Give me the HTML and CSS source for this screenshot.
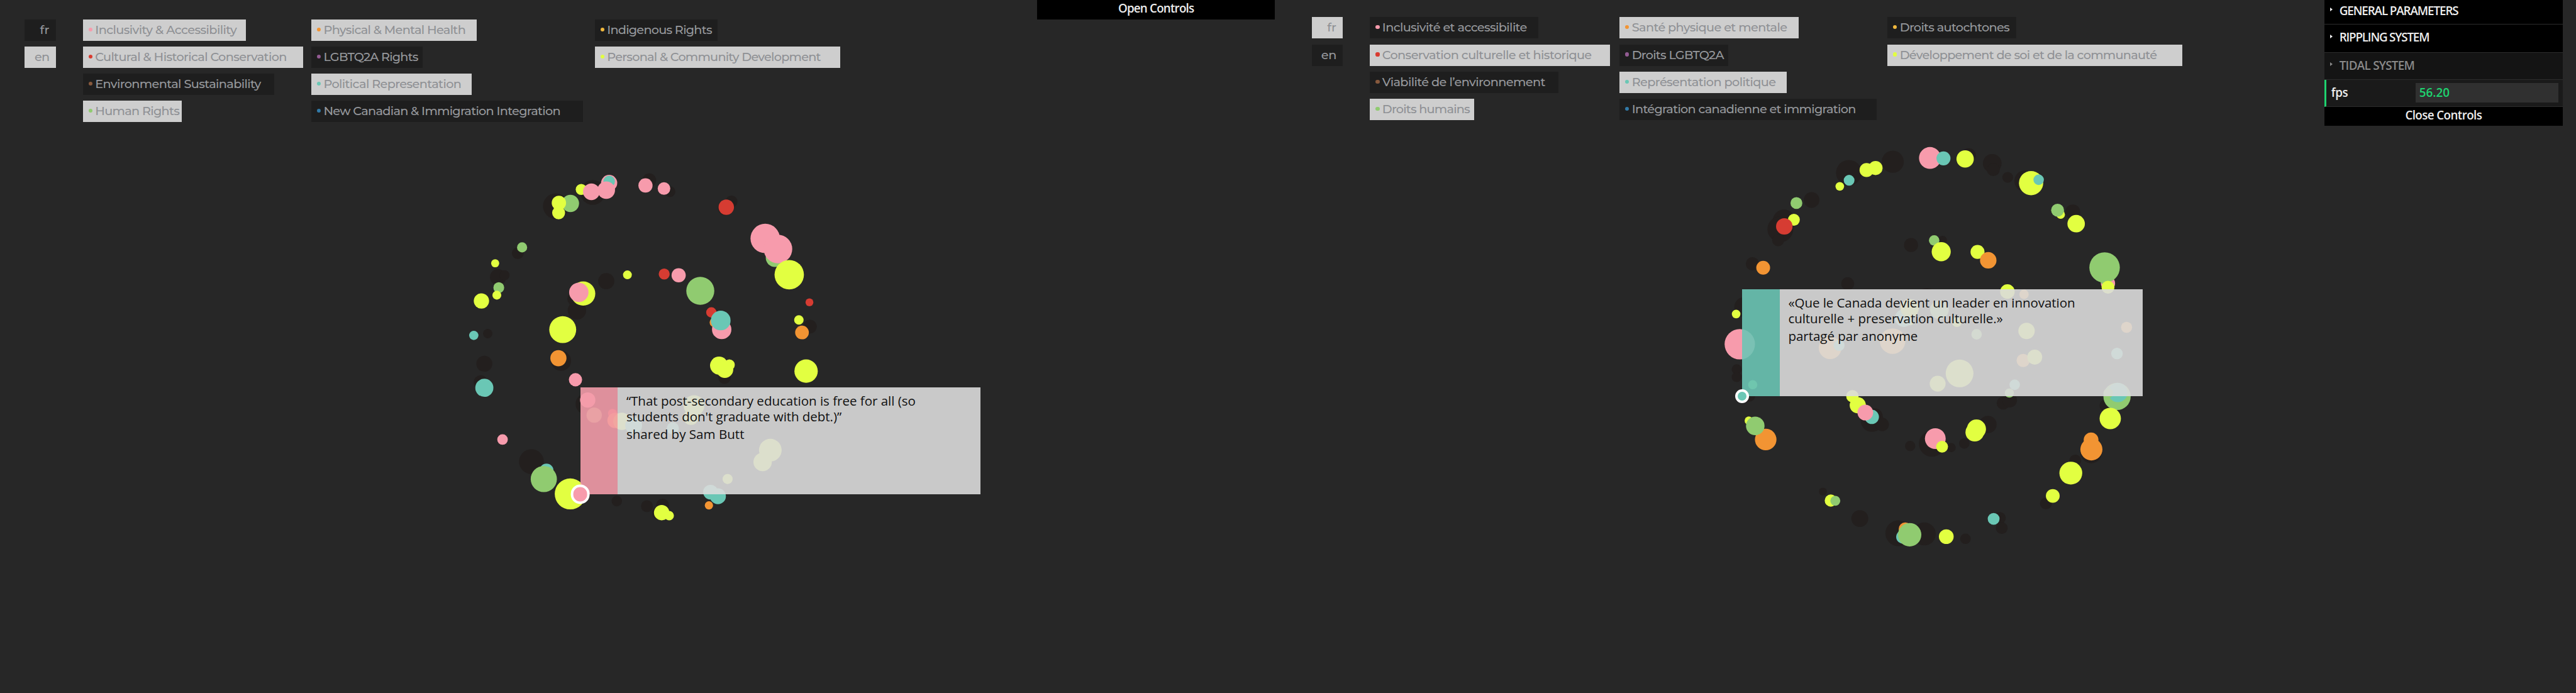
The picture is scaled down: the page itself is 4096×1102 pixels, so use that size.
FILE: index.html
```
<!DOCTYPE html>
<html lang="en">
<head>
<meta charset="utf-8">
<title>Visions for Canada</title>
<link rel="stylesheet" href="styles.css">
</head>
<body>
<main class="stage">
  <svg class="field" id="field" viewBox="0 0 4782 1286"></svg>

  <section class="panel panel-en">
    <nav class="langs">
      <a class="tag lang"><span data-text="15">fr</span></a>
      <a class="tag lang on"><span data-text="25">en</span></a>
    </nav>
    <div class="column">
      <a class="tag on pink" data-box="303"><span data-text="260">Inclusivity &amp; Accessibility</span></a>
      <a class="tag on red" data-box="409"><span data-text="353">Cultural &amp; Historical Conservation</span></a>
      <a class="tag brown" data-box="355.5"><span data-text="305">Environmental Sustainability</span></a>
      <a class="tag on green" data-box="184"><span data-text="154">Human Rights</span></a>
    </div>
    <div class="column">
      <a class="tag on orange" data-box="306.5"><span data-text="261">Physical &amp; Mental Health</span></a>
      <a class="tag purple" data-box="207"><span data-text="173">LGBTQ2A Rights</span></a>
      <a class="tag on teal" data-box="297.5"><span data-text="253">Political Representation</span></a>
      <a class="tag blue" data-box="504"><span data-text="437">New Canadian &amp; Immigration Integration</span></a>
    </div>
    <div class="column">
      <a class="tag gold" data-box="228"><span data-text="192">Indigenous Rights</span></a>
      <a class="tag on yellow" data-box="455.5"><span data-text="394">Personal &amp; Community Development</span></a>
    </div>
  </section>

  <section class="panel panel-fr" lang="fr">
    <nav class="langs">
      <a class="tag lang on"><span data-text="15">fr</span></a>
      <a class="tag lang"><span data-text="26">en</span></a>
    </nav>
    <div class="column">
      <a class="tag pink" data-box="312.4"><span data-text="266">Inclusivité et accessibilite</span></a>
      <a class="tag on red" data-box="445.7"><span data-text="386">Conservation culturelle et historique</span></a>
      <a class="tag brown" data-box="349.4"><span data-text="300">Viabilité de l’environnement</span></a>
      <a class="tag on green" data-box="193.6"><span data-text="160">Droits humains</span></a>
    </div>
    <div class="column">
      <a class="tag on orange" data-box="332.4"><span data-text="285.5">Santé physique et mentale</span></a>
      <a class="tag purple" data-box="201"><span data-text="168">Droits LGBTQ2A</span></a>
      <a class="tag on teal" data-box="310.3"><span data-text="264.6">Représentation politique</span></a>
      <a class="tag blue" data-box="477"><span data-text="413">Intégration canadienne et immigration</span></a>
    </div>
    <div class="column">
      <a class="tag gold" data-box="238.5"><span data-text="201">Droits autochtones</span></a>
      <a class="tag on yellow" data-box="547"><span data-text="474.6">Développement de soi et de la communauté</span></a>
    </div>
  </section>

  <article class="card card-en">
    <div class="swatch"></div>
    <div class="quote">
      <p><span data-text="534.5">“That post-secondary education is free for all (so</span><br><span data-text="397">students don't graduate with debt.)”</span></p>
      <p class="author"><span data-text="216.5">shared by Sam Butt</span></p>
    </div>
    <i class="marker"></i>
  </article>

  <article class="card card-fr" lang="fr">
    <div class="swatch"></div>
    <div class="quote">
      <p><span data-text="530">«Que le Canada devient un leader en innovation</span><br><span data-text="396">culturelle + preservation culturelle.»</span></p>
      <p class="author"><span data-text="238">partagé par anonyme</span></p>
    </div>
    <i class="marker"></i>
  </article>

  <div class="gui gui-closed">
    <div class="toggle"><span data-text="138">Open Controls</span></div>
  </div>

  <div class="gui gui-open">
    <div class="folder"><i class="arrow"></i><span data-text="218">GENERAL PARAMETERS</span></div>
    <div class="folder second"><i class="arrow"></i><span data-text="164">RIPPLING SYSTEM</span></div>
    <div class="folder muted"><i class="arrow"></i><span data-text="137">TIDAL SYSTEM</span></div>
    <div class="number"><span class="name"><span data-text="28.5">fps</span></span><span class="value"><span data-text="54">56.20</span></span></div>
    <div class="toggle"><span data-text="139.7">Close Controls</span></div>
  </div>
</main>
<script src="app.js"></script>
</body>
</html>
```
FILE: styles.css
```
* { box-sizing: border-box; }

html { background: #272727; overflow: hidden; }

body { margin: 0; overflow: hidden; }

.stage {
  position: relative;
  display: grid;
  grid-template-columns: 2391px 2391px;
  width: 4782px;
  height: 1287px;
  overflow: hidden;
  background: #272727;
  zoom: 0.85655;
}

.field { position: absolute; left: 0; top: 0; width: 4782px; height: 1286px; }

/* Category filters */
.panel {
  position: relative;
  display: grid;
  align-items: start;
  align-content: start;
  font: 500 22.5px/37.6px "Montserrat", "Inter", sans-serif;
}
.panel-en { grid-template-columns: 108px 424px 526.3px 500px; padding: 36px 0 0 46px; }
.panel-fr { grid-template-columns: 107.8px 463.4px 497.3px 600px; padding: 32px 0 0 44.5px; }

.langs, .column { display: flex; flex-direction: column; align-items: flex-start; gap: 10.6px; }

.tag {
  display: flex;
  align-items: flex-start;
  height: 39.8px;
  padding-left: 10.4px;
  white-space: nowrap;
  color: #96989c;
  background: #1e1e1e;
}
.tag.on { color: #8f9195; background: #cecece; }
.tag::before {
  content: "";
  flex: none;
  width: 7.2px;
  height: 7.2px;
  margin: 15px 5px 0 0;
  border-radius: 50%;
  background: currentColor;
}
.lang { width: 57.6px; padding: 0 12px 0 0; justify-content: flex-end; }
.lang::before { display: none; }

.pink::before { background: #f79bac; }
.red::before { background: #d93b30; }
.brown::before { background: #87593d; }
.green::before { background: #90cb70; }
.orange::before { background: #f29433; }
.purple::before { background: #925b92; }
.teal::before { background: #6ac7b5; }
.blue::before { background: #327aa8; }
.gold::before { background: #f0b83d; }
.yellow::before { background: #e2ff41; }

/* Shared visions */
.card {
  position: absolute;
  display: flex;
  width: 743.3px;
  height: 198.7px;
}
.card-en { left: 1077px; top: 719.2px; --tone: rgba(243, 156, 170, 0.9); --dot: #f79bac; }
.card-fr { left: 3233.9px; top: 537px; --tone: rgba(107, 197, 181, 0.9); --dot: #6ac7b5; }
.swatch { width: 69.7px; background: var(--tone); }
.quote {
  flex: 1;
  padding: 10.6px 0 0 16px;
  background: rgba(220, 220, 220, 0.9);
  color: #101010;
  font: 400 24px/29px "Open Sans", "Noto Sans", sans-serif;
  white-space: nowrap;
}
.quote p { margin: 0; }
.quote .author { margin-top: 3.4px; font-weight: 450; }
.marker {
  position: absolute;
  left: 0;
  bottom: 0;
  border: 5px solid #fff;
  border-radius: 50%;
  background: var(--dot);
  transform: translate(-50%, 50%);
}
.card-en .marker { width: 36px; height: 36px; }
.card-fr .marker { width: 25.6px; height: 25.6px; }

/* Parameter controls */
.gui {
  position: absolute;
  top: 0;
  width: 442px;
  color: #eee;
  font: 600 22px/36px "Open Sans", "Noto Sans", sans-serif;
  white-space: nowrap;
}
.gui-closed { left: 1925px; }
.gui-open { left: 4315px; }
.toggle { height: 36px; line-height: 31px; text-align: center; background: #000; }
.folder {
  display: flex;
  height: 46px;
  padding-left: 11px;
  border-bottom: 2px solid #2c2c2c;
  background: #000;
  line-height: 40px;
}
.folder.second { height: 52px; line-height: 48px; }
.folder.muted { height: 50px; line-height: 48px; color: #898989; background: #141414; }
.arrow {
  margin: 14px 12px 0 0;
  border: solid transparent;
  border-width: 4px 0 4px 5px;
  border-left-color: currentColor;
  height: 0;
}
.second .arrow { margin-top: 18px; }
.muted .arrow { margin-top: 18px; }
.number {
  display: flex;
  height: 50px;
  padding: 6px 8px 0 9px;
  border-left: 4px solid #1ed36f;
  border-bottom: 2px solid #2c2c2c;
  background: #1a1a1a;
}
.name { width: 157px; }
.value { flex: 1; height: 36px; padding-left: 6.5px; background: #303030; color: #1ed36f; }
```
FILE: app.js
```
const COLORS = {
  D: '#231f1e', Y: '#e2ff41', P: '#f79bac', R: '#d63c32',
  G: '#90cb70', T: '#6ac7b5', O: '#f29433'
};

// Each entry: colour key, centre x, centre y, radius. Later dots lie on top.
const DOTS = `
D 1031.7 382.7 23.7;D 1100.4 357.3 23;D 1205.3 334.7 12.7;D 1243.7 355.7 10;D 1358 374 11;D 1346.8 386 14
D 961.2 470 11;D 924.5 514.7 15;D 936.6 511 9.3;D 905.4 619.3 8.7;D 899.1 675.3 14.8;D 892.4 709.7 13
D 1125.4 522 15;D 1065.2 555 12;D 1071 576.3 17;D 1041.5 670 18.5;D 1345 701 11.5;D 1503.5 606.3 12.7
D 1088 750 19.5;D 1145 930.3 9.7;D 1201 939.7 11;D 1230 937.7 12;D 1223 952.3 12.5;D 986.5 857 23
D 1218 792 12;D 1264 789 11;D 1448 790 10
Y 1079 351.7 10.3;P 1130.8 339.7 15;T 1130.8 336.7 10.7;P 1125.4 353 16.3;P 1097.8 356 15.5
G 1058.9 377.7 16;Y 1037.5 376.7 13.3;Y 1037 395.3 12;P 1198.2 344.3 13.2;P 1232.6 350 11.7
R 1348.2 384.7 14.3;G 1438.5 478.5 17;P 1420.5 442.7 27.3;P 1444.2 462.3 26.5;Y 1465.1 510 27.3
R 1502.6 561.3 7.3;Y 1483 594 8.8;O 1488.8 617.3 12.7;Y 1496.4 689 21.7;G 969.2 459.3 9.4
Y 919.2 488.7 7.5;G 925.9 534 10;Y 922.3 548 8.2;Y 893.7 558.7 14.2;T 879.5 622.7 8.6
Y 1082.6 545 22.5;P 1074.5 542.7 18;Y 1164.7 510.3 8.2;R 1233 508.7 10.2;P 1259.8 511 13.2
G 1300 540 26;R 1320.5 580 9.6;O 1326 598.7 8.7;P 1339.7 611.7 18;T 1337.9 595 18.3
Y 1044.6 612 25;O 1036.6 665 15;P 1068.3 705 12.3;Y 1334.8 678.7 16.7;Y 1354 677.3 10;Y 1345.5 686 15.7
T 899.1 720 16.8;P 1091 742.7 14.2;G 1103 770.7 14.2;R 1137 767.5 8.3;O 1141.7 780.7 14.2
Y 1154.3 782.3 16;T 1176.3 790 15.7;T 1249 795.3 11.3;Y 1288.3 753 19.3;Y 1282.7 775 14
Y 1430 835.7 21;Y 1415.7 857.7 17;Y 1350.7 889.3 9.3;T 1319 913.7 13.7;T 1332.7 921.3 14.8
O 1316 938.3 7.7;Y 1228.3 951.7 14.3;Y 1242.3 957.3 8.7;T 1014.5 873.7 13;G 1009.5 889.3 24.3
Y 1058.6 917 28.8;P 932.9 816 9.8
D 3432.1 320.7 23.7;D 3513.6 300.3 20.5;D 3654.8 288.3 13;D 3698.3 303.3 17.3;D 3700.3 315 12
D 3727 329.3 10;D 3759.4 336 20;D 3363 371.3 14.5;D 3311.8 410 21;D 3305 425.5 24;D 3300.8 446 11
D 3253.2 489.7 12.3;D 3847.8 393.3 13.7;D 3547.6 455 13;D 3606.2 445.7 8;D 3430 526.7 12
D 3238 570 18.5;D 3577 558 23;D 3224 685.7 9.3;D 3224 700 9.3;D 3247 734 11.5;D 3413 693 24
D 3430 712 16;D 3526 674 12;D 3543 715 10;D 3654 640 16;D 3754 722 9;D 3770 682 14
D 3475 780.7 21;D 3480 773 15;D 3494 788 12.5;D 3586.3 824 24;D 3622 831 8.5;D 3546 828 9.5
D 3646.5 823.3 9.7;D 3690.4 788 16;D 3718.6 748.3 12;D 3730.7 743 13.5;D 3909.5 753 12;D 3930 719 12
D 3882 840 20;D 3852.5 855 11;D 3798 934.7 11;D 3384 912.7 7.3;D 3452.5 962.7 15.7;D 3524 990 24
D 3572.2 991.3 21.3;D 3648.6 1000.3 9.7;D 3712.4 961.7 11;D 3716 980.3 11;D 3953 634 8
Y 3465 315.7 13;Y 3481.7 312 13;T 3432.6 334.7 10;Y 3415.3 346 8;G 3334.8 377 11;Y 3330.1 408 11
R 3312.3 420.3 15.3;P 3582.7 293.3 20.3;T 3607.8 294 13;Y 3648 295 16.1;Y 3770.4 340 22.5
T 3784.5 333.7 9.7;Y 3825.3 398.3 8;G 3819.6 390.3 12;Y 3854.1 415.3 16.2;O 3273.1 497 12.8
G 3590.5 446.3 9.7;Y 3603.6 467.3 17.7;Y 3671 467.7 13;O 3690.9 483.3 15.3;P 3913.2 526 13.2
G 3906.9 496.7 28.3;G 3906.5 520 8;Y 3913.2 533.3 12;Y 3222.9 583 8;Y 3726.5 541.3 13.5
O 3757.3 546.3 8.7;O 3947.7 607.7 10.3;Y 3762 614.3 15.2;P 3229.7 639 28.2;Y 3546 597 7
T 3534 590.7 16.3;Y 3545 572.3 17;G 3600.3 575 17.3;Y 3632.7 598 9;G 3669.3 620.7 9.7
O 3513.3 633.3 23.7;O 3397.3 645.7 21;T 3414 641.3 10.2;Y 3637.7 693.3 25.7;Y 3597 712.3 14.7
G 3253.7 714.3 8.5;Y 3438.7 735.5 11.5;Y 3448.7 752.3 15;T 3474.7 774 13.3;P 3462.7 766 14.6
Y 3246.4 781 7.7;O 3277.8 816 20;G 3258.4 790.7 17.2;P 3592.6 814.3 19.3;Y 3605.2 829.3 11
Y 3669 796.5 17.7;Y 3665.8 802.5 17.2;G 3730.1 729.7 8.5;T 3740 714.3 9.7;O 3755.8 669.3 12.3
Y 3777.2 663 13.8;T 3929.9 656.3 10.7;G 3930 736 25.3;T 3931.5 728.7 18;G 3913.7 730 9
Y 3917.4 777 19.8;O 3881.8 816.7 13.7;O 3882.4 834.3 20.5;Y 3844.2 878.3 21.2;Y 3810.7 920.7 12.8
Y 3398.6 929.3 11.3;G 3407 929.7 9.2;O 3536.7 982 12;T 3532.5 996.7 12.5;G 3545 992.7 21.7
Y 3613 996.3 13.7;T 3700.9 963.3 11
`;

const field = document.getElementById('field');
DOTS.trim().split(/[;\n]+/).forEach((entry) => {
  const [key, x, y, r] = entry.trim().split(' ');
  const dot = document.createElementNS('http://www.w3.org/2000/svg', 'circle');
  dot.setAttribute('cx', x);
  dot.setAttribute('cy', y);
  dot.setAttribute('r', r);
  dot.setAttribute('fill', COLORS[key]);
  field.appendChild(dot);
});

document.querySelectorAll('[data-box]').forEach((tag) => {
  tag.style.width = tag.dataset.box + 'px';
});

// Track each run of text out to its set measure.
const stage = document.querySelector('.stage');
const scale = stage.getBoundingClientRect().width / 4782;
document.querySelectorAll('[data-text]').forEach((run) => {
  const natural = run.getBoundingClientRect().width / scale;
  const count = run.textContent.length;
  const spacing = (Number(run.dataset.text) + 2.5 - natural) / count;
  run.style.letterSpacing = spacing.toFixed(3) + 'px';
});
```
